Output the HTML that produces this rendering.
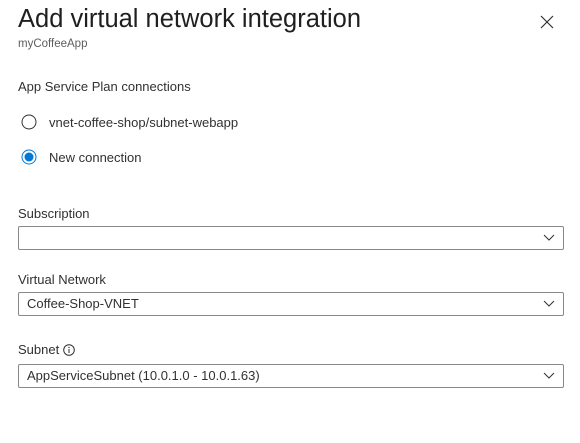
<!DOCTYPE html>
<html><head><style>
body{margin:0;width:580px;height:443px;background:#fff;font-family:"Liberation Sans",sans-serif;color:#323130;position:relative;overflow:hidden}
.a{position:absolute;white-space:nowrap}
.box{position:absolute;left:18px;width:544px;height:22px;border:1px solid #8a8886;border-radius:2px;font-size:13px;line-height:22px}
.box span{position:absolute;left:8px;top:0}
.chev{position:absolute;right:8px;top:7px}
</style></head><body>
<div class="a" style="left:18px;top:5px;font-size:25.5px;color:#201f1e">Add virtual network integration</div>
<div class="a" style="left:18px;top:38px;font-size:11.5px;color:#605e5c">myCoffeeApp</div>
<svg class="a" style="left:540px;top:15px" width="14" height="14"><path d="M1 1L13 13M13 1L1 13" stroke="#323130" stroke-width="1.2"/></svg>
<div class="a" style="left:18px;top:79px;font-size:13px">App Service Plan connections</div>
<svg class="a" style="left:21px;top:114px" width="16" height="16"><circle cx="8" cy="8" r="7" fill="none" stroke="#323130" stroke-width="1"/></svg>
<div class="a" style="left:49px;top:115px;font-size:13px">vnet-coffee-shop/subnet-webapp</div>
<svg class="a" style="left:21px;top:149px" width="16" height="16"><circle cx="8" cy="8" r="7" fill="none" stroke="#0078d4" stroke-width="1"/><circle cx="8" cy="8" r="4.5" fill="#0078d4"/></svg>
<div class="a" style="left:49px;top:150px;font-size:13px">New connection</div>
<div class="a" style="left:18px;top:206px;font-size:13px">Subscription</div>
<div class="box" style="top:226px"><svg class="chev" width="12" height="8"><path d="M1 1L6 6L11 1" fill="none" stroke="#323130"/></svg></div>
<div class="a" style="left:18px;top:272px;font-size:13px">Virtual Network</div>
<div class="box" style="top:292px"><span>Coffee-Shop-VNET</span><svg class="chev" width="12" height="8"><path d="M1 1L6 6L11 1" fill="none" stroke="#323130"/></svg></div>
<div class="a" style="left:18px;top:342px;font-size:13px">Subnet</div>
<svg class="a" style="left:63px;top:344px" width="12" height="12"><circle cx="6" cy="6" r="5.3" fill="none" stroke="#323130"/><path d="M6 5v4" stroke="#323130"/><circle cx="6" cy="3.4" r=".7" fill="#323130"/></svg>
<div class="box" style="top:364px"><span>AppServiceSubnet (10.0.1.0 - 10.0.1.63)</span><svg class="chev" width="12" height="8"><path d="M1 1L6 6L11 1" fill="none" stroke="#323130"/></svg></div>
</body></html>
